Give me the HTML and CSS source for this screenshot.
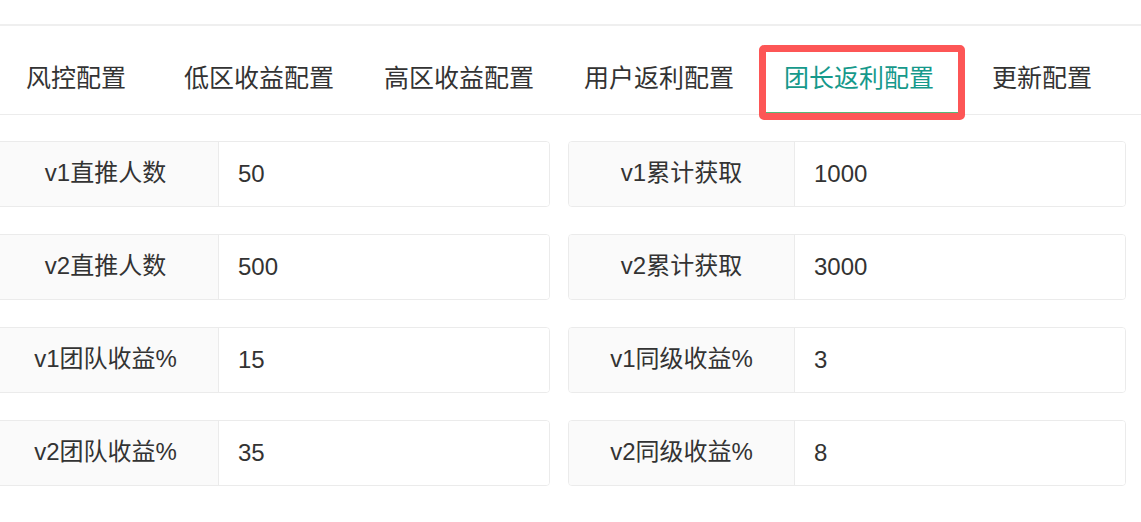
FILE: index.html
```html
<!DOCTYPE html>
<html lang="zh-CN">
<head>
<meta charset="utf-8">
<title>团长返利配置</title>
<link rel="stylesheet" href="styles.css">
</head>
<body>
  <div class="page">
    <div class="top-rule"></div>
    <nav class="tabs">
      <div class="tab tab-short">风控配置</div>
      <div class="tab">低区收益配置</div>
      <div class="tab">高区收益配置</div>
      <div class="tab">用户返利配置</div>
      <div class="tab is-active">团长返利配置<span class="highlight"></span></div>
      <div class="tab tab-short">更新配置</div>
    </nav>
    <form class="config-grid">
      <label class="field"><span class="field-label">v1直推人数</span><input class="field-input" value="50"></label>
      <label class="field"><span class="field-label">v1累计获取</span><input class="field-input" value="1000"></label>
      <label class="field"><span class="field-label">v2直推人数</span><input class="field-input" value="500"></label>
      <label class="field"><span class="field-label">v2累计获取</span><input class="field-input" value="3000"></label>
      <label class="field"><span class="field-label">v1团队收益%</span><input class="field-input" value="15"></label>
      <label class="field"><span class="field-label">v1同级收益%</span><input class="field-input" value="3"></label>
      <label class="field"><span class="field-label">v2团队收益%</span><input class="field-input" value="35"></label>
      <label class="field"><span class="field-label">v2同级收益%</span><input class="field-input" value="8"></label>
    </form>
  </div>
</body>
</html>
```

FILE: styles.css
```css
html, body {
  margin: 0;
  padding: 0;
  background: #ffffff;
}

body {
  width: 1141px;
  height: 522px;
  overflow: hidden;
  font-family: "Liberation Sans", "Noto Sans CJK SC", sans-serif;
  color: #333333;
}

.page {
  width: 100%;
}

.top-rule {
  height: 24px;
  border-bottom: 2px solid #efefef;
}

/* tab strip */
.tabs {
  display: flex;
  margin: 16px 0 0 -7px;
  border-bottom: 1px solid #ececec;
}

.tab {
  position: relative;
  box-sizing: border-box;
  height: 72px;
  line-height: 72px;
  padding: 0 25px;
  font-size: 25px;
  color: #333333;
  text-align: center;
  white-space: nowrap;
}

.tab-short {
  min-width: 166px;
}

.tab.is-active {
  color: #16998b;
  box-shadow: inset 0 -2px 0 #56b877;
}

/* marker frame around the current tab */
.highlight {
  position: absolute;
  left: 0;
  top: 3px;
  width: 206px;
  height: 75px;
  box-sizing: border-box;
  border: 7px solid #fd5656;
  border-radius: 5px;
  pointer-events: none;
}

/* settings form */
.config-grid {
  display: grid;
  grid-template-columns: 558px 558px;
  column-gap: 18px;
  row-gap: 27px;
  margin: 26px 0 0 -8px;
}

.field {
  display: flex;
  box-sizing: border-box;
  height: 66px;
  border: 1px solid #ebebeb;
  border-radius: 4px;
  overflow: hidden;
  font-size: 24px;
}

.field-label {
  display: block;
  box-sizing: border-box;
  width: 226px;
  flex: none;
  height: 64px;
  line-height: 62px;
  text-align: center;
  white-space: nowrap;
  background: #fafafa;
  border-right: 1px solid #ebebeb;
  color: #333333;
}

.field-input {
  flex: 1;
  min-width: 0;
  border: none;
  outline: none;
  padding: 0 0 0 19px;
  margin: 0;
  font: inherit;
  color: #333333;
  background: #ffffff;
}
```
